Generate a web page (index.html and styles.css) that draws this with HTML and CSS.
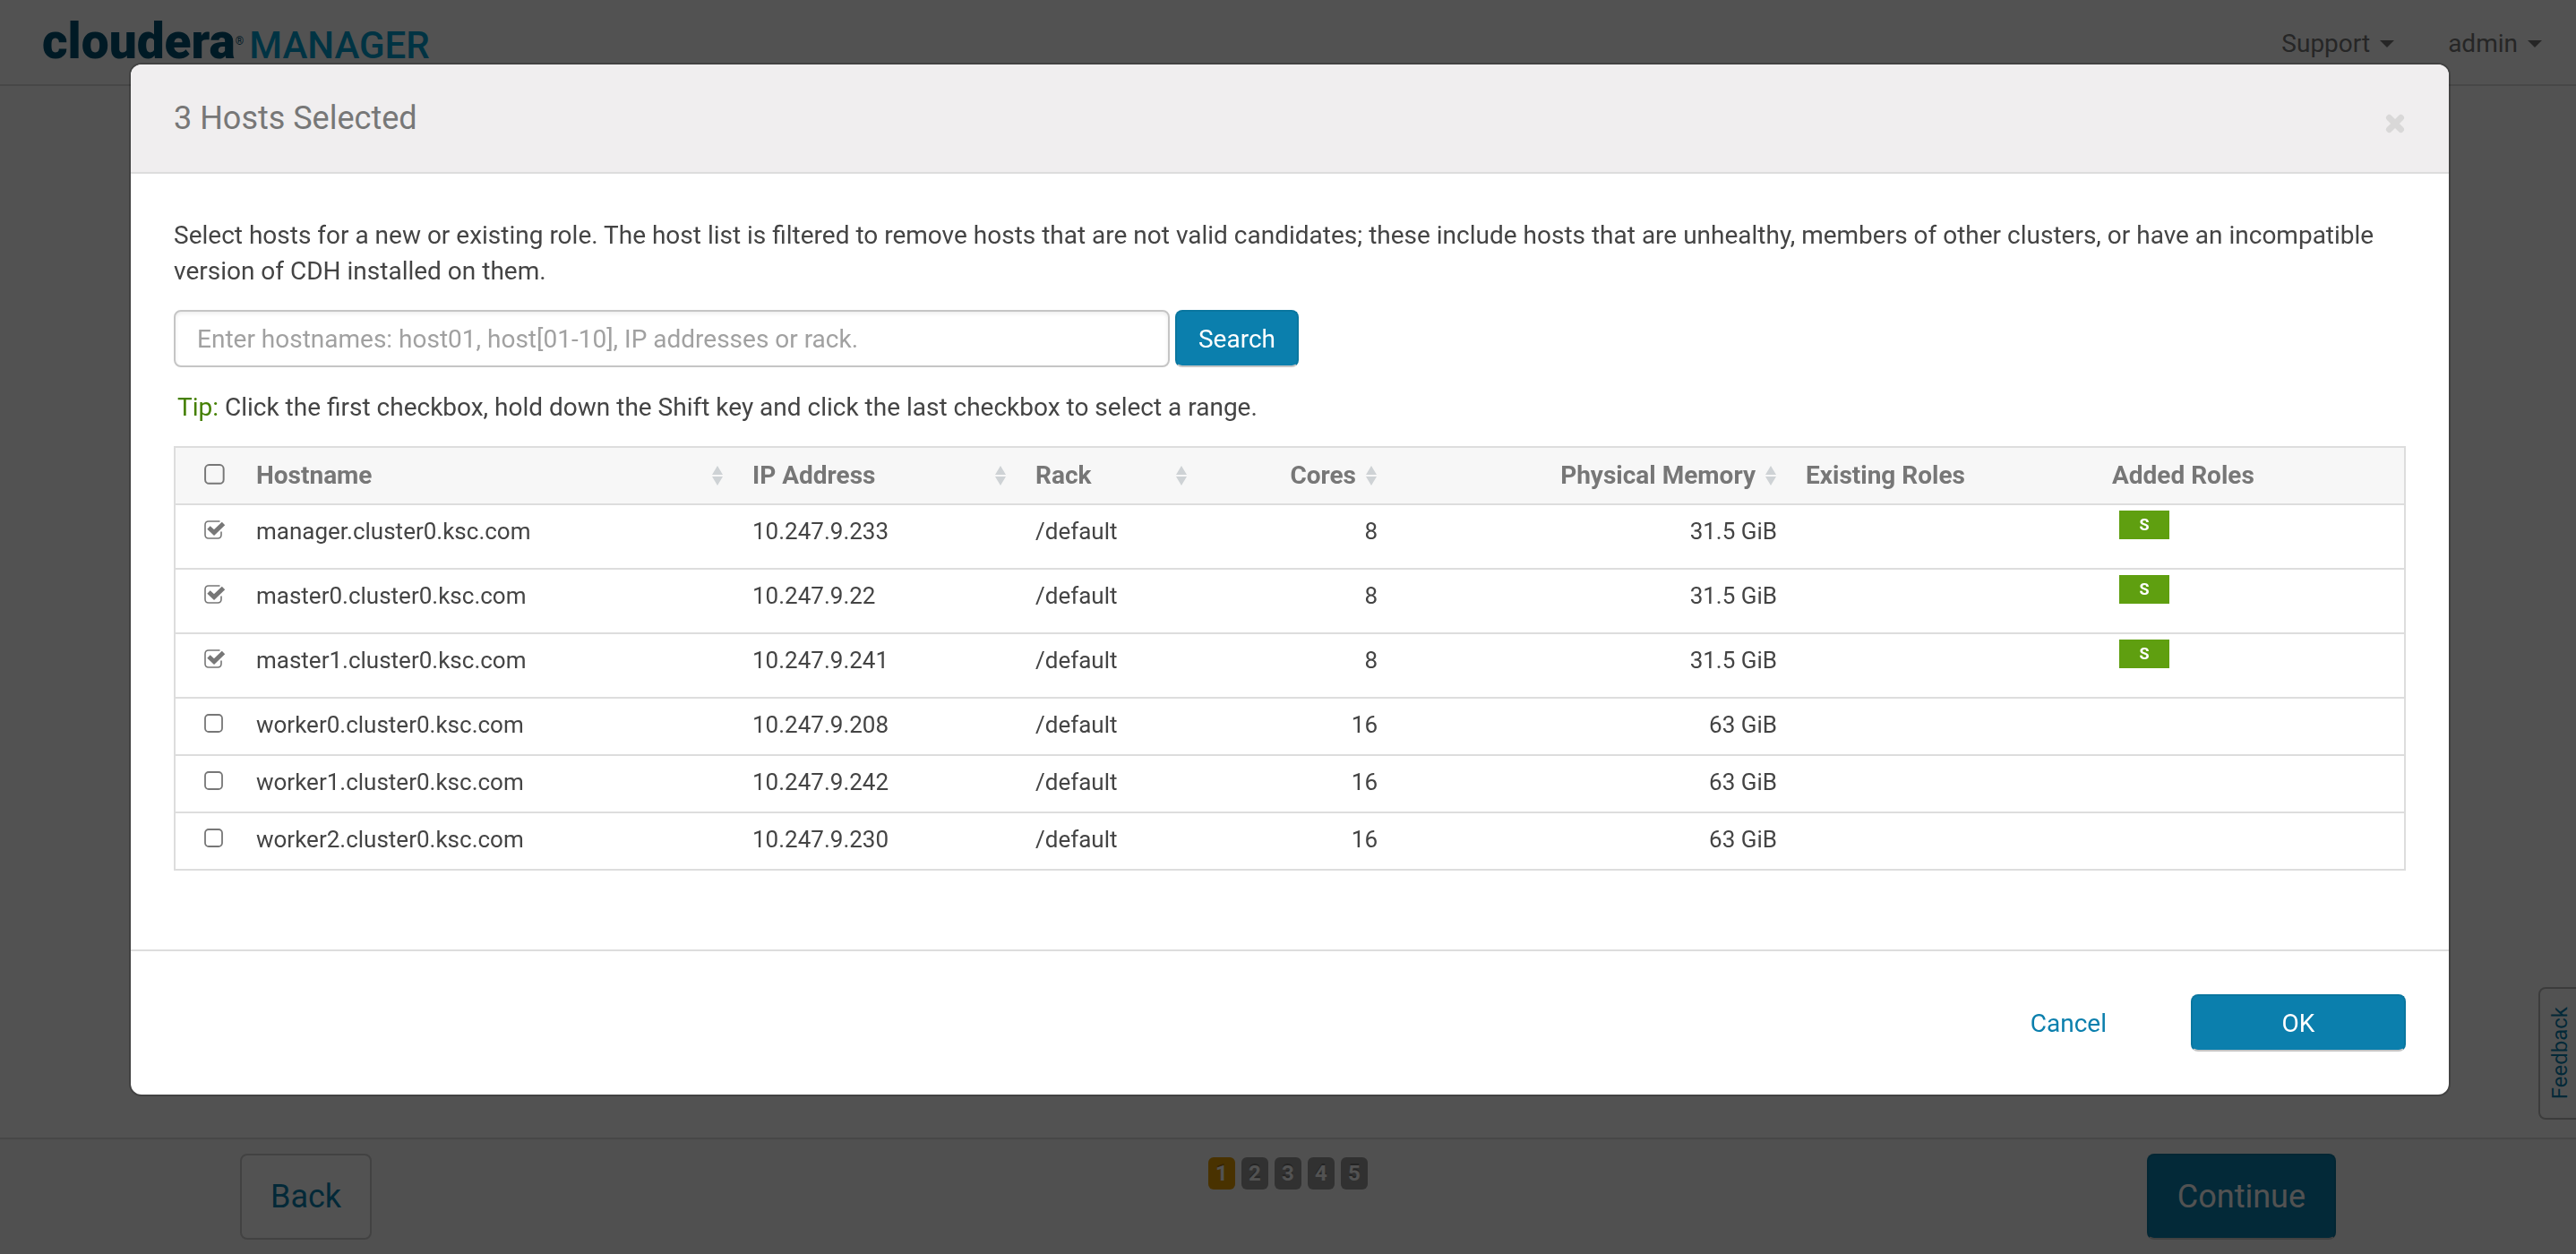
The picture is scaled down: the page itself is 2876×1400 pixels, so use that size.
FILE: index.html
```html
<!DOCTYPE html>
<html lang="en">
<head>
<meta charset="utf-8">
<title>Cloudera Manager</title>
<link rel="stylesheet" href="styles.css">
</head>
<body>
<svg class="defs" aria-hidden="true">
  <symbol id="sort" viewBox="0 0 14 22"><path d="M7 0l6 10H1zM7 22l6-10H1z"/></symbol>
</svg>
<div class="page">
  <header class="topbar">
    <a class="logo" href="#"><span class="logo-name">cloudera</span><span class="logo-mark">®</span><span class="logo-product">MANAGER</span></a>
    <nav class="nav">
      <a class="nav-link" href="#">Support<span class="caret"></span></a>
      <a class="nav-link" href="#">admin<span class="caret"></span></a>
    </nav>
  </header>
  <main class="content"></main>
  <footer class="wizard">
    <div class="wizard-inner">
      <button class="wizard-btn" type="button">Back</button>
      <ol class="steps">
        <li class="step step-current">1</li>
        <li class="step">2</li>
        <li class="step">3</li>
        <li class="step">4</li>
        <li class="step">5</li>
      </ol>
      <button class="wizard-btn wizard-btn-primary" type="button">Continue</button>
    </div>
  </footer>
  <button class="feedback" type="button">Feedback</button>
</div>

<div class="backdrop">
  <section class="modal" role="dialog" aria-labelledby="modal-title">
    <header class="modal-header">
      <h1 class="modal-title" id="modal-title">3 Hosts Selected</h1>
      <button class="close" type="button" aria-label="Close">
        <svg viewBox="0 0 22 22" width="22" height="22"><path d="M4.500 4.500l13 13M17.500 4.500l-13 13"/></svg>
      </button>
    </header>
    <div class="modal-body">
      <p class="intro">Select hosts for a new or existing role. The host list is filtered to remove hosts that are not valid candidates; these include hosts that are unhealthy, members of other clusters, or have an incompatible version of CDH installed on them.</p>
      <form class="search">
        <input class="search-input" type="text" aria-label="Hostnames" placeholder="Enter hostnames: host01, host[01-10], IP addresses or rack.">
        <button class="btn btn-search" type="button">Search</button>
      </form>
      <p class="tip"><span class="tip-label">Tip:</span> Click the first checkbox, hold down the Shift key and click the last checkbox to select a range.</p>
      <table class="hosts">
        <colgroup>
          <col class="col-check"><col class="col-host"><col class="col-ip"><col class="col-rack"><col class="col-cores"><col class="col-memory"><col class="col-existing"><col class="col-added">
        </colgroup>
        <thead>
          <tr>
            <th class="check"><input class="box" type="checkbox" aria-label="Select all hosts"></th>
            <th><div class="head">Hostname<svg class="sort"><use href="#sort"/></svg></div></th>
            <th><div class="head">IP Address<svg class="sort"><use href="#sort"/></svg></div></th>
            <th><div class="head">Rack<svg class="sort"><use href="#sort"/></svg></div></th>
            <th><div class="head head-right">Cores<svg class="sort"><use href="#sort"/></svg></div></th>
            <th><div class="head head-right">Physical Memory<svg class="sort"><use href="#sort"/></svg></div></th>
            <th>Existing Roles</th>
            <th>Added Roles</th>
          </tr>
        </thead>
        <tbody>
          <tr>
            <td class="check"><input class="box" type="checkbox" aria-label="manager.cluster0.ksc.com" checked></td>
            <td>manager.cluster0.ksc.com</td><td>10.247.9.233</td><td>/default</td><td class="num">8</td><td class="num">31.5 GiB</td><td></td>
            <td class="added"><span class="role">S</span></td>
          </tr>
          <tr>
            <td class="check"><input class="box" type="checkbox" aria-label="master0.cluster0.ksc.com" checked></td>
            <td>master0.cluster0.ksc.com</td><td>10.247.9.22</td><td>/default</td><td class="num">8</td><td class="num">31.5 GiB</td><td></td>
            <td class="added"><span class="role">S</span></td>
          </tr>
          <tr>
            <td class="check"><input class="box" type="checkbox" aria-label="master1.cluster0.ksc.com" checked></td>
            <td>master1.cluster0.ksc.com</td><td>10.247.9.241</td><td>/default</td><td class="num">8</td><td class="num">31.5 GiB</td><td></td>
            <td class="added"><span class="role">S</span></td>
          </tr>
          <tr>
            <td class="check"><input class="box" type="checkbox" aria-label="worker0.cluster0.ksc.com"></td>
            <td>worker0.cluster0.ksc.com</td><td>10.247.9.208</td><td>/default</td><td class="num">16</td><td class="num">63 GiB</td><td></td><td></td>
          </tr>
          <tr>
            <td class="check"><input class="box" type="checkbox" aria-label="worker1.cluster0.ksc.com"></td>
            <td>worker1.cluster0.ksc.com</td><td>10.247.9.242</td><td>/default</td><td class="num">16</td><td class="num">63 GiB</td><td></td><td></td>
          </tr>
          <tr>
            <td class="check"><input class="box" type="checkbox" aria-label="worker2.cluster0.ksc.com"></td>
            <td>worker2.cluster0.ksc.com</td><td>10.247.9.230</td><td>/default</td><td class="num">16</td><td class="num">63 GiB</td><td></td><td></td>
          </tr>
        </tbody>
      </table>
    </div>
    <footer class="modal-footer">
      <button class="btn btn-link" type="button">Cancel</button>
      <button class="btn btn-ok" type="button">OK</button>
    </footer>
  </section>
</div>
</body>
</html>
```
FILE: styles.css
```css
* { box-sizing: border-box; }
body {
  margin: 0;
  color: #444;
  font: 28px/40px Roboto, "Liberation Sans", sans-serif;
}
button, input { font: inherit; }
button { cursor: pointer; }
.defs { display: none; }

/* Page behind the dialog */
.page {
  display: flex;
  flex-direction: column;
  min-height: 100vh;
  background: #fff;
}
.topbar {
  display: flex;
  justify-content: space-between;
  align-items: center;
  height: 96px;
  padding: 3px 38px 0 47px;
  border-bottom: 2px solid #ddd;
}
.logo {
  display: flex;
  align-items: baseline;
  color: #005173;
  text-decoration: none;
}
.logo-name { font-size: 55px; font-weight: 900; }
.logo-mark { align-self: flex-start; font-size: 12px; }
.logo-product {
  margin-left: 6px;
  color: #00a0d0;
  font-size: 42px;
  font-weight: 500;
}
.nav { display: flex; gap: 60px; }
.nav-link {
  display: flex;
  align-items: center;
  gap: 11px;
  color: #777;
  text-decoration: none;
}
.caret {
  border: 8px solid transparent;
  border-top-color: #777;
  border-bottom: 0;
}
.content { flex: 1; }
.wizard {
  border-top: 2px solid #ddd;
  background: #f7f7f7;
}
.wizard-inner {
  display: grid;
  grid-template-columns: 1fr auto 1fr;
  max-width: 2340px;
  margin: 0 auto;
  padding: 16px 0;
}
.wizard-btn {
  justify-self: start;
  height: 96px;
  padding: 0 32px;
  border: 2px solid #ccc;
  border-radius: 8px;
  background: #fff;
  color: #0b7fad;
  font-size: 36px;
}
.wizard-btn-primary {
  justify-self: end;
  border-color: #0a769f;
  border-bottom-color: #ccc;
  background: #0b7fad;
  color: #fff;
}
.steps {
  display: flex;
  gap: 7px;
  margin: 4px 0 0;
  padding: 0;
  list-style: none;
}
.step {
  width: 30px;
  height: 36px;
  border-radius: 6px;
  background: #999;
  color: #fff;
  font-size: 24px;
  font-weight: 700;
  line-height: 36px;
  text-align: center;
  text-shadow: 0 -2px 0 rgba(0, 0, 0, .25);
}
.step-current { background: #e49b00; }
.feedback {
  position: fixed;
  right: -2px;
  bottom: 150px;
  width: 44px;
  height: 148px;
  padding: 0 0 0 2px;
  border: 2px solid #bbb;
  border-radius: 8px 0 0 8px;
  background: #fff;
  color: #0b7fad;
  font-size: 24px;
  writing-mode: sideways-lr;
}

/* Dialog */
.backdrop {
  position: fixed;
  inset: 0;
  padding: 70px 140px 70px 144px;
  background: rgba(0, 0, 0, .68);
}
.modal {
  border: 2px solid rgba(0, 0, 0, .2);
  border-radius: 14px;
  background: #fff;
  background-clip: padding-box;
}
.modal-header {
  display: flex;
  justify-content: space-between;
  align-items: center;
  height: 122px;
  padding: 0 49px 0 48px;
  border-bottom: 2px solid #ddd;
  border-radius: 12px 12px 0 0;
  background: #f0eeef;
}
.modal-title {
  margin: 0;
  color: #777;
  font-size: 36px;
  font-weight: 400;
}
.close {
  display: flex;
  padding: 11px 0 0;
  border: 0;
  background: none;
}
.close path { stroke: #d9d8d8; stroke-width: 7; stroke-linecap: round; }
.modal-body { padding: 49px 48px 88px; }
.intro { margin: 0 0 23px; }
.search { display: flex; gap: 6px; }
.search-input {
  width: 1112px;
  height: 64px;
  padding: 0 24px;
  border: 2px solid #c5c5c5;
  border-radius: 8px;
  box-shadow: inset 0 2px 4px rgba(0, 0, 0, .08);
  color: #444;
}
.search-input::placeholder { color: #a1a1a1; }
.btn {
  height: 64px;
  padding: 2px 0 0;
  border: 2px solid #0a769f;
  border-bottom-color: #c5c5c5;
  border-radius: 8px;
  background: #0b7fad;
  color: #fff;
}
.btn-search { width: 138px; }
.tip { margin: 25px 4px 23px; }
.tip-label { color: #458000; }

.hosts {
  width: 100%;
  border: 2px solid #ddd;
  border-spacing: 0;
  table-layout: fixed;
  font-size: 26px;
}
.col-check { width: 74px; }
.col-host { width: 554px; }
.col-ip { width: 316px; }
.col-rack { width: 202px; }
.col-cores { width: 212px; }
.col-memory { width: 446px; }
.col-existing { width: 342px; }
.col-added { width: 342px; }
.hosts th {
  padding: 11px 16px;
  border-bottom: 2px solid #ddd;
  background: #f7f7f7;
  color: #777;
  font-size: 28px;
  font-weight: 700;
  text-align: left;
}
.hosts td {
  padding: 9px 16px 13px;
  border-bottom: 2px solid #ddd;
  vertical-align: top;
}
.hosts tbody tr:last-child td { border-bottom: 0; }
.hosts .num { text-align: right; }
.hosts .check { padding-left: 32px; padding-right: 0; }
.head {
  display: flex;
  justify-content: space-between;
  align-items: center;
}
.head-right { justify-content: flex-end; gap: 10px; }
.sort { width: 14px; height: 22px; fill: #ced2d5; }
.box {
  display: block;
  width: 24px;
  height: 22px;
  margin: 8px 0 10px;
  appearance: none;
  background: url("data:image/svg+xml,%3Csvg xmlns='http://www.w3.org/2000/svg' viewBox='0 0 24 22'%3E%3Crect x='1' y='1' width='19' height='19' rx='4' fill='none' stroke='%23777' stroke-width='1.800'/%3E%3C/svg%3E") no-repeat;
}
.hosts th .box {
  width: 26px;
  height: 24px;
  margin: 7px 0 9px;
}
.box:checked {
  background-image: url("data:image/svg+xml,%3Csvg xmlns='http://www.w3.org/2000/svg' viewBox='0 0 24 22'%3E%3Cpath d='M17.500 1H5Q1 1 1 5v11q0 4 4 4h10q4 0 4-4v-3.500' fill='none' stroke='%23777' stroke-width='1.600'/%3E%3Cpath d='M5 8l6 5.500L21.500 3.500' fill='none' stroke='%23777' stroke-width='5'/%3E%3C/svg%3E");
}
.hosts .added { padding: 6px 24px 32px; }
.role {
  display: block;
  width: 56px;
  height: 32px;
  background: #5f9f10;
  color: #fff;
  font-size: 18px;
  font-weight: 700;
  line-height: 32px;
  text-align: center;
}
.modal-footer {
  display: flex;
  justify-content: flex-end;
  gap: 48px;
  padding: 48px;
  border-top: 2px solid #ddd;
}
.btn-link {
  padding: 2px 44px 0;
  border-color: transparent;
  background: none;
  color: #0b7fad;
}
.btn-ok { width: 240px; }
```
